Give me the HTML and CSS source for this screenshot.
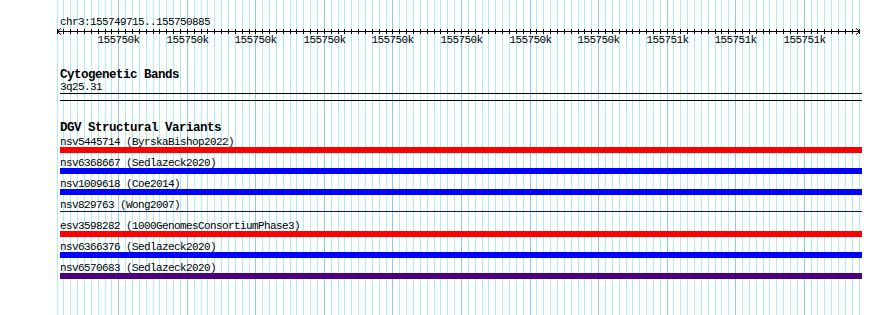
FILE: index.html
```html
<!DOCTYPE html>
<html>
<head>
<meta charset="utf-8">
<link rel="stylesheet" href="styles.css">
</head>
<body>
<div class="page">
  <svg class="grid" id="grid" width="890" height="315"></svg>
  <div class="view">
    <section class="ruler">
      <div class="loc">chr3:155749715..155750885</div>
      <svg class="scale" id="scale" width="802" height="20"></svg>
    </section>
    <section class="track cyto">
      <h2 class="track-label">Cytogenetic Bands</h2>
      <div class="feat-label">3q25.31</div>
      <div class="band"></div>
    </section>
    <section class="track dgv">
      <h2 class="track-label">DGV Structural Variants</h2>
      <div class="row"><div class="feat-label">nsv5445714 (ByrskaBishop2022)</div><div class="bar red"></div></div>
      <div class="row"><div class="feat-label">nsv6368667 (Sedlazeck2020)</div><div class="bar blue"></div></div>
      <div class="row"><div class="feat-label">nsv1009618 (Coe2014)</div><div class="bar blue"></div></div>
      <div class="row"><div class="feat-label">nsv829763 (Wong2007)</div><div class="bar thin"></div></div>
      <div class="row"><div class="feat-label">esv3598282 (1000GenomesConsortiumPhase3)</div><div class="bar red"></div></div>
      <div class="row"><div class="feat-label">nsv6366376 (Sedlazeck2020)</div><div class="bar blue"></div></div>
      <div class="row"><div class="feat-label">nsv6570683 (Sedlazeck2020)</div><div class="bar purple"></div></div>
    </section>
  </div>
</div>
<script src="script.js"></script>
</body>
</html>
```
FILE: styles.css
```css
html, body {
  margin: 0;
  padding: 0;
  background: #fff;
}
.page {
  position: relative;
  width: 890px;
  height: 315px;
  overflow: hidden;
  font-family: "Liberation Mono", "DejaVu Sans Mono", monospace;
  font-size: 11px;
  letter-spacing: -0.6px;
  color: #000;
}
.grid {
  position: absolute;
  left: 0;
  top: 0;
}
.view {
  position: relative;
  margin-left: 60px;
  width: 802px;
  padding-top: 17px;
}
.loc {
  line-height: 10px;
  height: 10px;
}
.scale {
  display: block;
  overflow: visible;
}
.scale-label {
  font-family: "Liberation Mono", "DejaVu Sans Mono", monospace;
  font-size: 11px;
  letter-spacing: -0.6px;
}
.track-label {
  margin: 0;
  font-size: 12.5px;
  letter-spacing: -0.5px;
  font-weight: bold;
  line-height: 10px;
  height: 10px;
}
.feat-label {
  line-height: 10px;
  height: 10px;
  white-space: nowrap;
}
.cyto {
  margin-top: 23px;
}
.cyto .feat-label {
  margin-top: 2px;
}
.band {
  margin-top: 1px;
  height: 6px;
  border-top: 1px solid #000;
  border-bottom: 1px solid #000;
}
.dgv {
  margin-top: 22px;
}
.row {
  height: 21px;
  display: flex;
  flex-direction: column;
}
.row .feat-label {
  padding-top: 4px;
}
.bar {
  height: 6px;
}
.red { background: #ff0000; }
.blue { background: #0000ff; }
.purple { background: #4b0082; }
.thin {
  background: linear-gradient(#0000ff, #0000ff) 0 1px / 100% 1px no-repeat;
}
```
FILE: script.js
```js
(function () {
  var NS = 'http://www.w3.org/2000/svg';
  var start = 155749715, end = 155750885;
  var x0 = 60, w = 802;
  var scale = w / (end - start);
  var grid = document.getElementById('grid');
  var sc = document.getElementById('scale');
  function el(parent, name, attrs, text) {
    var e = document.createElementNS(NS, name);
    for (var k in attrs) e.setAttribute(k, attrs[k]);
    if (text) e.textContent = text;
    parent.appendChild(e);
    return e;
  }
  var labels = ['155750k','155750k','155750k','155750k','155750k','155750k','155750k','155750k','155751k','155751k','155751k'];
  var li = 0;
  el(sc, 'line', {x1: -3, y1: 4.5, x2: 800, y2: 4.5, stroke: '#000', 'stroke-width': 1});
  el(sc, 'polyline', {points: '1,1.5 -3,4.5 1,7.5', fill: 'none', stroke: '#000', 'stroke-width': 1});
  el(sc, 'polyline', {points: '796,1.5 800,4.5 796,7.5', fill: 'none', stroke: '#000', 'stroke-width': 1});
  for (var b = 155749710; b <= end; b += 10) {
    var x = Math.round(x0 + (b - start) * scale);
    if (x < 56 || x > 859) continue;
    var major = (b % 100 === 0);
    el(grid, 'line', {x1: x + 0.5, y1: 0, x2: x + 0.5, y2: 315, stroke: major ? '#8ccbe8' : '#aeeef0', 'stroke-width': 1});
    var sx = x - x0 + 0.5;
    el(sc, 'line', {x1: sx, y1: 2, x2: sx, y2: 7, stroke: '#000', 'stroke-width': 1});
    if (major) {
      el(sc, 'text', {x: sx, y: 16, 'text-anchor': 'middle', 'class': 'scale-label'}, labels[li++]);
    }
  }
})();
```
